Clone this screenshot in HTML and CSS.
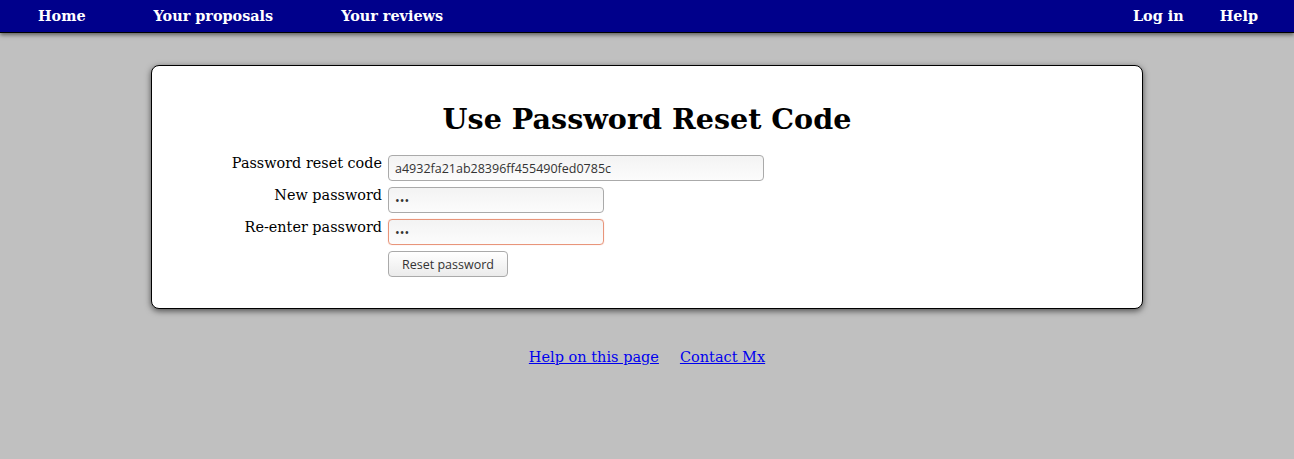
FILE: index.html
```html
<!DOCTYPE html>
<html>
<head>
<meta charset="utf-8">
<title>Use Password Reset Code</title>
<link rel="stylesheet" href="styles.css">
</head>
<body>
<nav class="topbar">
  <div class="nav-left">
    <a class="nav-item" href="#">Home</a>
    <a class="nav-item" href="#">Your proposals</a>
    <a class="nav-item" href="#">Your reviews</a>
  </div>
  <div class="nav-right">
    <a class="nav-item-r" href="#">Log in</a>
    <a class="nav-item-r" href="#">Help</a>
  </div>
</nav>
<main class="card">
  <h1 class="title">Use Password Reset Code</h1>
  <form class="form">
    <label class="label">Password reset code</label>
    <input class="field field-wide" type="text" value="a4932fa21ab28396ff455490fed0785c">
    <label class="label">New password</label>
    <input class="field" type="password" value="abc">
    <label class="label">Re-enter password</label>
    <input class="field field-error" type="password" value="abc">
    <span></span>
    <div><button class="btn" type="button">Reset password</button></div>
  </form>
</main>
<footer class="footer">
  <a href="#">Help on this page</a>
  <a href="#">Contact Mx</a>
</footer>
</body>
</html>
```
FILE: styles.css
```css
html, body {
  margin: 0;
  padding: 0;
  background: #c0c0c0;
  font-family: "DejaVu Serif", serif;
}
.topbar {
  height: 32px;
  background: #00008b;
  border-bottom: 1px solid #000;
  box-shadow: 0 2px 4px rgba(0,0,0,0.5);
  display: flex;
  justify-content: space-between;
  align-items: center;
}
.nav-left { display: flex; padding-left: 4px; }
.nav-right { display: flex; padding-right: 18px; }
.nav-item, .nav-item-r {
  color: #fff;
  text-decoration: none;
  font-weight: bold;
  font-size: 14.4px;
  line-height: 30px;
}
.nav-item { padding: 0 34px; }
.nav-item-r { padding: 0 18px; }
.card {
  width: 990px;
  margin: 32px auto 0;
  background: #fff;
  border: 1px solid #000;
  border-radius: 8px;
  box-shadow: 0 2px 6px rgba(0,0,0,0.6);
  padding: 33px 0 31px;
}
.title {
  margin: 0 0 16px;
  text-align: center;
  font-size: 28.6px;
  line-height: 40px;
  font-weight: bold;
}
.form {
  display: grid;
  grid-template-columns: 230px auto;
  column-gap: 6px;
  row-gap: 6px;
  justify-content: start;
  justify-items: start;
}
.label {
  justify-self: end;
  font-size: 14.4px;
  line-height: 17px;
}
.field {
  box-sizing: border-box;
  width: 216px;
  height: 26px;
  border: 1px solid #aaa;
  border-radius: 4px;
  background: linear-gradient(#f3f3f3, #fcfcfc);
  padding: 0 6px;
  font-family: "Open Sans", "DejaVu Sans", sans-serif;
  font-size: 12.5px;
  color: #333;
  margin: 0;
}
.field-wide { width: 376px; }
.field-error {
  border-color: #e8957a;
  box-shadow: 0 0 1px #f0b0a0;
}
.btn {
  box-sizing: border-box;
  width: 120px;
  height: 26px;
  border: 1px solid #aaa;
  border-radius: 4px;
  background: linear-gradient(#ffffff, #ebebeb);
  font-family: "Open Sans", "DejaVu Sans", sans-serif;
  font-size: 12.5px;
  color: #333;
  padding: 0;
  margin: 0;
}
.footer {
  display: flex;
  justify-content: center;
  gap: 21px;
  margin-top: 40px;
  font-size: 14.5px;
}
.footer a { color: #00e; }
```
